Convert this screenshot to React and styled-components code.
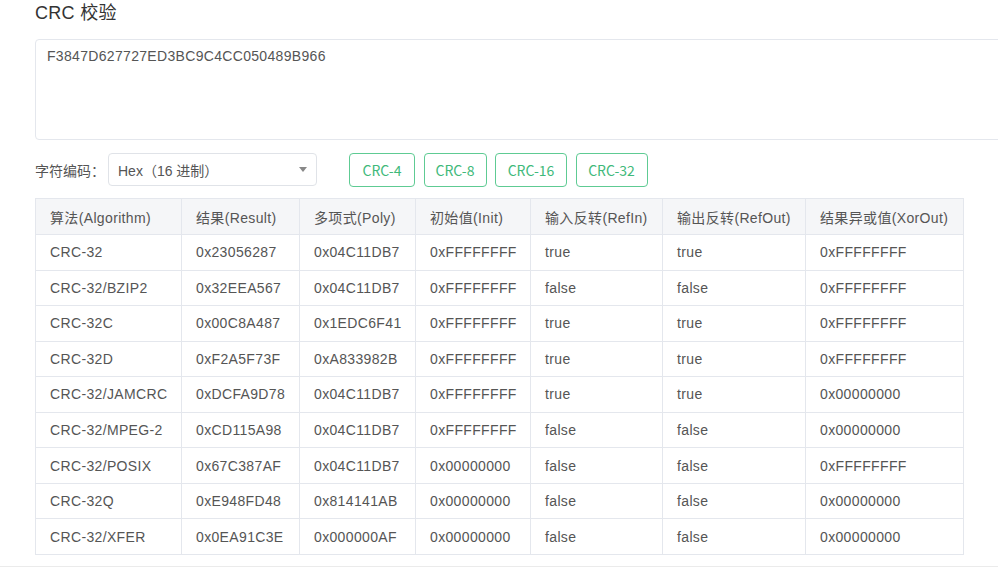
import React from "react";
import styled, { createGlobalStyle } from "styled-components";

const Global = createGlobalStyle`
  html, body { margin: 0; padding: 0; background: #fff; overflow: hidden; }
  body { font-family: "Liberation Sans", Arial, "Noto Sans CJK SC", sans-serif; color: #606266; }
  * { box-sizing: border-box; }
`;

const Page = styled.div`
  height: 567px;
  padding-left: 35px;
  border-bottom: 1px solid #ebebeb;
  display: flex;
  flex-direction: column;
  align-items: flex-start;
`;

const Title = styled.h1`
  margin: 0 0 13px;
  font-size: 18px;
  line-height: 26px;
  font-weight: normal;
  color: #333;
  letter-spacing: 0.3px;
  font-family: "Liberation Sans", Arial, "Noto Sans CJK SC", sans-serif;
`;

const TextArea = styled.div`
  width: 1000px;
  height: 101px;
  border: 1px solid #e4e7ed;
  border-radius: 4px;
  padding: 8px 11px;
  font-size: 14px;
  line-height: 16px;
  letter-spacing: 0.32px;
  color: #555;
`;

const Controls = styled.div`
  margin-top: 13px;
  display: flex;
  align-items: center;
  height: 33px;
`;

const Label = styled.span`
  font-size: 14px;
  color: #555;
  font-family: "Noto Sans CJK SC", sans-serif;
  width: 73px;
`;

const Select = styled.div`
  width: 209px;
  height: 33px;
  border: 1px solid #e0e3e8;
  border-radius: 4px;
  display: flex;
  align-items: center;
  justify-content: space-between;
  padding: 0 9px;
  font-size: 14px;
  color: #555;
  margin-right: 32px;
`;

const Caret = styled.span`
  width: 0;
  height: 0;
  border-left: 4px solid transparent;
  border-right: 4px solid transparent;
  border-top: 5px solid #888;
`;

const Buttons = styled.div`
  display: flex;
  gap: 8.5px;
`;

const Btn = styled.button`
  height: 34px;
  width: ${(p) => p.$w}px;
  background: #fff;
  border: 1px solid #5ecb93;
  border-radius: 4px;
  color: #3fb97a;
  font-family: "Noto Sans CJK SC", sans-serif;
  font-size: 14px;
  padding: 0;
  cursor: pointer;
`;

const Table = styled.table`
  margin-top: 12px;
  border-collapse: collapse;
  table-layout: fixed;
  width: 928px;
  font-size: 14px;
  letter-spacing: 0.35px;
`;

const Col = styled.col`
  width: ${(p) => p.$w}px;
`;

const Th = styled.th`
  height: 36px;
  background: #f5f6f8;
  border: 1px solid #e4e7ed;
  text-align: left;
  font-weight: normal;
  color: #555;
  padding: 0 0 0 14px;
  white-space: nowrap;
`;

const Td = styled.td`
  height: 35.55px;
  border: 1px solid #e4e7ed;
  padding: 0 0 0 14px;
  color: #555;
  white-space: nowrap;
`;

const headers = [
  "算法(Algorithm)",
  "结果(Result)",
  "多项式(Poly)",
  "初始值(Init)",
  "输入反转(RefIn)",
  "输出反转(RefOut)",
  "结果异或值(XorOut)",
];

const widths = [146, 118, 116, 115, 132, 143, 158];

const rows = [
  ["CRC-32", "0x23056287", "0x04C11DB7", "0xFFFFFFFF", "true", "true", "0xFFFFFFFF"],
  ["CRC-32/BZIP2", "0x32EEA567", "0x04C11DB7", "0xFFFFFFFF", "false", "false", "0xFFFFFFFF"],
  ["CRC-32C", "0x00C8A487", "0x1EDC6F41", "0xFFFFFFFF", "true", "true", "0xFFFFFFFF"],
  ["CRC-32D", "0xF2A5F73F", "0xA833982B", "0xFFFFFFFF", "true", "true", "0xFFFFFFFF"],
  ["CRC-32/JAMCRC", "0xDCFA9D78", "0x04C11DB7", "0xFFFFFFFF", "true", "true", "0x00000000"],
  ["CRC-32/MPEG-2", "0xCD115A98", "0x04C11DB7", "0xFFFFFFFF", "false", "false", "0x00000000"],
  ["CRC-32/POSIX", "0x67C387AF", "0x04C11DB7", "0x00000000", "false", "false", "0xFFFFFFFF"],
  ["CRC-32Q", "0xE948FD48", "0x814141AB", "0x00000000", "false", "false", "0x00000000"],
  ["CRC-32/XFER", "0x0EA91C3E", "0x000000AF", "0x00000000", "false", "false", "0x00000000"],
];

const buttons = [
  ["CRC-4", 66],
  ["CRC-8", 63],
  ["CRC-16", 72],
  ["CRC-32", 72],
];

export default function App() {
  return (
    <>
      <Global />
      <Page>
        <Title>CRC 校验</Title>
        <TextArea>F3847D627727ED3BC9C4CC050489B966</TextArea>
        <Controls>
          <Label>字符编码：</Label>
          <Select>
            <span>Hex（16 进制）</span>
            <Caret />
          </Select>
          <Buttons>
            {buttons.map(([t, w]) => (
              <Btn key={t} $w={w}>{t}</Btn>
            ))}
          </Buttons>
        </Controls>
        <Table>
          <colgroup>
            {widths.map((w, i) => (
              <Col key={i} $w={w} />
            ))}
          </colgroup>
          <thead>
            <tr>
              {headers.map((h) => (
                <Th key={h}>{h}</Th>
              ))}
            </tr>
          </thead>
          <tbody>
            {rows.map((r) => (
              <tr key={r[0]}>
                {r.map((c, i) => (
                  <Td key={i}>{c}</Td>
                ))}
              </tr>
            ))}
          </tbody>
        </Table>
      </Page>
    </>
  );
}
